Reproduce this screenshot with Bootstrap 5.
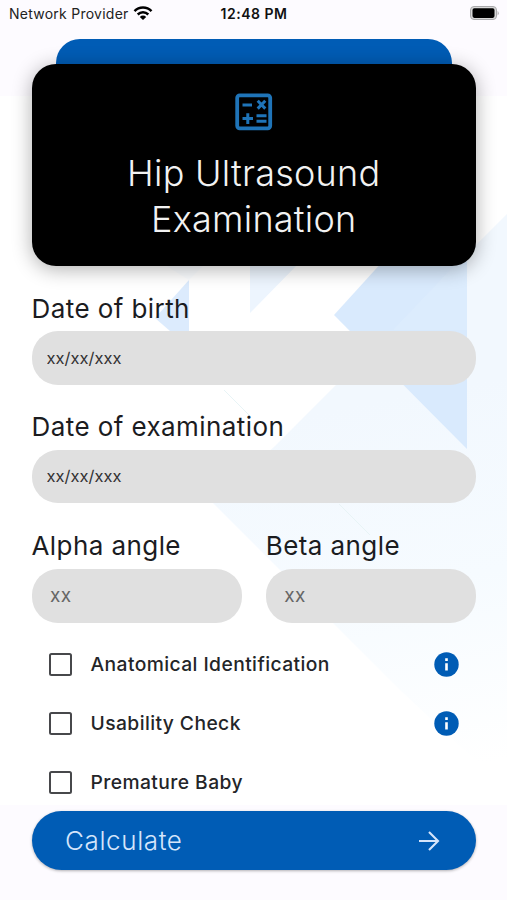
<!DOCTYPE html>
<html lang="en">
<head>
<meta charset="utf-8">
<meta name="viewport" content="width=device-width, initial-scale=1">
<title>Hip Ultrasound Examination</title>
<link href="https://cdn.jsdelivr.net/npm/bootstrap@5.3.0/dist/css/bootstrap.min.css" rel="stylesheet">
<style>
  body { font-family: Inter, "Liberation Sans", sans-serif; background: #fdfbff; color: #1b1c1f; overflow: hidden; }
  .screen { width: 507px; height: 900px; }
  .backdrop { top: 96px; left: 0; z-index: 0; }
  .status { height: 39px; padding: 0 8px 11px 9px; font-size: 14px; line-height: 28px; color: #111; }
  .status .clock { font-weight: 600; letter-spacing: .5px; left: 1px; right: 0; top: 0; }
  .carrier { letter-spacing: .25px; color: #222; }
  .content { padding: 0 31px 0 31.5px; }
  .tab-back { height: 25px; margin: 0 24.5px; background: #005cb5; border-radius: 24px 24px 0 0; }
  .hero { height: 202px; border-radius: 24px; background: #000; color: #f2f2f2; box-shadow: 0 3px 20px rgba(0,0,0,.32); padding-top: 26px; }
  .hero h1 { font-size: 36px; font-weight: 300; line-height: 46px; letter-spacing: .25px; margin: 16px 0 0; }
  .caption { font-size: 26px; line-height: 32px; letter-spacing: .42px; margin: 0; }
  .mt-group { margin-top: 26.5px; }
  .field { background: #e0e0e0; height: 53.5px; border: 0; border-radius: 26px; margin-top: 6.5px; padding: 0 15px; font-size: 16.5px; color: #333; }
  .field-sm { height: 54px; margin-top: 7px; padding: 0 18.5px; font-size: 19px; letter-spacing: .5px; color: #666; }
  .field-sm::placeholder, .field::placeholder { color: inherit; opacity: 1; }
  .checks { padding: 13px 17px 0 17.5px; height: 188.5px; }
  .check-row { height: 58.7px; }
  .check-row label { font-size: 19.25px; font-weight: 500; letter-spacing: .42px; margin-left: 18.5px; color: #242528; }
  .box { width: 23px; height: 23px; border: 2px solid #47484b; border-radius: 2.5px; appearance: none; margin: 0; }
  .calc { height: 58.5px; border-radius: 30px; background: #005cb5; color: #d5e5fb; font-size: 26px; font-weight: 300; letter-spacing: .6px; padding: 1px 36px 0 33.5px; box-shadow: 0 1px 3px rgba(0,0,0,.3); border: 0; }
</style>
<script src="https://cdn.jsdelivr.net/npm/bootstrap@5.3.0/dist/js/bootstrap.bundle.min.js"></script>
</head>
<body>
<div class="screen position-relative overflow-hidden">
  <!-- Folded-ribbon backdrop behind the form -->
  <svg class="backdrop position-absolute" width="507" height="709" viewBox="0 96 507 709" aria-hidden="true">
    <defs>
      <linearGradient id="fade" gradientUnits="userSpaceOnUse" x1="380" y1="400" x2="450" y2="770">
        <stop offset="0" stop-color="#f2f8fe"/><stop offset=".5" stop-color="#f6fbff"/><stop offset="1" stop-color="#fff"/>
      </linearGradient>
    </defs>
    <rect y="96" width="507" height="709" fill="#fff"/>
    <path d="M507 214L275 446L213 503L400 690L507 790Z" fill="url(#fade)"/>
    <path d="M384 260H467V449L334 315Z" fill="#d9eafd"/>
    <path d="M455 265L393 330H467V265Z" fill="#dfedfd" opacity=".5"/>
    <path d="M189 280V331H170L155 318Z" fill="#dcebfd"/>
    <path d="M189 280L204 265H165Z" fill="#fbfdff"/>
    <path d="M250 260H302L250 313Z" fill="#edf5fe"/>
    <path d="M224 390L250 416M339 504L370 535" stroke="#e8f4f6" stroke-width="1" fill="none"/>
  </svg>

  <header class="status position-relative d-flex justify-content-between align-items-start">
    <div class="d-flex align-items-center">
      <span class="carrier">Network Provider</span>
      <svg class="ms-1" width="20" height="16" viewBox="0 0 20 16" fill="none" stroke="#000" stroke-width="2.5" aria-hidden="true">
        <path d="M1.5 5.1A12 12 0 0 1 18.5 5.1M4.7 8.5A7.6 7.6 0 0 1 15.3 8.5"/>
        <path d="M10 14.1L6.8 10.9A4.6 4.6 0 0 1 13.2 10.9Z" fill="#000" stroke="none"/>
      </svg>
    </div>
    <div class="clock position-absolute text-center">12:48 PM</div>
    <svg width="30" height="28" viewBox="0 0 30 28" aria-hidden="true">
      <rect x="1.5" y="6.5" width="26" height="13" rx="3.5" fill="#d9d9d9" stroke="#a9a9ab"/>
      <rect x="3.5" y="8.3" width="22" height="9.6" rx="1.8" fill="#000"/>
      <path d="M28.6 10.8V15.6Q30.8 13.2 28.6 10.8Z" fill="#a9a9ab"/>
    </svg>
  </header>

  <main class="content position-relative">
    <div class="tab-back"></div>
    <section class="hero text-center position-relative">
      <svg class="d-block mx-auto" width="44" height="44" viewBox="0 0 44 44" fill="none" stroke="#1f74b8" stroke-width="3" aria-hidden="true">
        <rect x="5.2" y="5.3" width="33" height="33" rx="2.5" stroke-width="3.8"/>
        <path d="M10.5 15H20M10.5 28.5H21M15.8 23.2V34M24.5 25.8H34.5M24.5 31.2H34.5M25.7 10.7L33.3 18.6M33.3 10.7L25.7 18.6"/>
      </svg>
      <h1>Hip Ultrasound<br>Examination</h1>
    </section>

    <form>
      <p class="caption mt-group">Date of birth</p>
      <input class="field form-control" placeholder="xx/xx/xxx" aria-label="Date of birth">
      <p class="caption mt-group">Date of examination</p>
      <input class="field form-control" placeholder="xx/xx/xxx" aria-label="Date of examination">
      <div class="row gx-4 mt-group">
        <div class="col-6">
          <p class="caption">Alpha angle</p>
          <input class="field field-sm form-control" placeholder="xx" aria-label="Alpha angle">
        </div>
        <div class="col-6">
          <p class="caption">Beta angle</p>
          <input class="field field-sm form-control" placeholder="xx" aria-label="Beta angle">
        </div>
      </div>
      <div class="checks">
        <div class="check-row d-flex align-items-center">
          <input class="box" type="checkbox" id="anatomical"><label for="anatomical">Anatomical Identification</label>
          <svg class="ms-auto" width="25" height="25" viewBox="0 0 25 25" aria-hidden="true"><circle cx="12.5" cy="12.5" r="12.2" fill="#005cb5"/><path d="M11.2 6.3H13.8V9H11.2ZM11.2 11.2H13.8V18.6H11.2Z" fill="#fff"/></svg>
        </div>
        <div class="check-row d-flex align-items-center">
          <input class="box" type="checkbox" id="usability"><label for="usability">Usability Check</label>
          <svg class="ms-auto" width="25" height="25" viewBox="0 0 25 25" aria-hidden="true"><circle cx="12.5" cy="12.5" r="12.2" fill="#005cb5"/><path d="M11.2 6.3H13.8V9H11.2ZM11.2 11.2H13.8V18.6H11.2Z" fill="#fff"/></svg>
        </div>
        <div class="check-row d-flex align-items-center">
          <input class="box" type="checkbox" id="premature"><label for="premature">Premature Baby</label>
        </div>
      </div>
      <button type="button" class="calc btn w-100 d-flex align-items-center justify-content-between">
        <span>Calculate</span>
        <svg width="22" height="22" viewBox="0 0 22 22" fill="none" stroke="#d5e5fb" stroke-width="2.1" aria-hidden="true"><path d="M1 11H20M11 2L20 11L11 20"/></svg>
      </button>
    </form>
  </main>
</div>
</body>
</html>
